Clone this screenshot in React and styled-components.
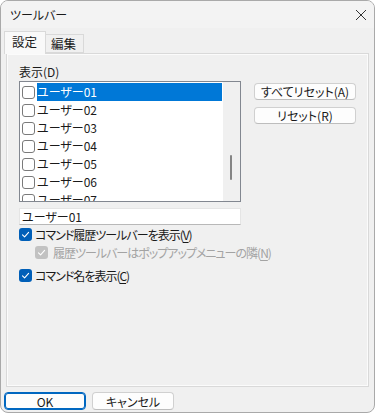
import React from 'react';
import styled, { createGlobalStyle } from 'styled-components';

const Global = createGlobalStyle`
  html, body { margin: 0; padding: 0; background: #ffffff; }
  body {
    font-family: "Noto Sans CJK JP", "Noto Sans", sans-serif;
    font-size: 12px;
    color: #1a1a1a;
    font-feature-settings: "palt";
  }
  * { box-sizing: border-box; }
`;

const Window = styled.div`
  width: 375px;
  height: 413px;
  display: flex;
  flex-direction: column;
  background: #f0f0f0;
  border: 1px solid #a9a9a9;
  border-radius: 8px;
  overflow: hidden;
`;

const TitleBar = styled.div`
  height: 27px;
  flex: none;
  display: flex;
  align-items: center;
  justify-content: space-between;
  padding: 0 4px 0 9px;
  background: #f3f3f3;
`;

const Title = styled.span`
  font-size: 12px;
  line-height: 16px;
`;

const CloseButton = styled.div`
  width: 14px;
  height: 14px;
  margin-right: 2px;
  display: flex;
  align-items: center;
  justify-content: center;
`;

const TabRow = styled.div`
  height: 25px;
  flex: none;
  display: flex;
  align-items: flex-end;
  padding-left: 3px;
  background: #f0f0f0;
`;

const Tab = styled.div`
  position: relative;
  z-index: ${(p) => (p.$active ? 2 : 1)};
  height: ${(p) => (p.$active ? 23 : 19)}px;
  margin-bottom: ${(p) => (p.$active ? -1 : 0)}px;
  padding: ${(p) => (p.$active ? '2px 8px 0 7px' : '1px 7px 0 5px')};
  background: ${(p) => (p.$active ? '#f9f9f9' : '#f0f0f0')};
  border: 1px solid #d9d9d9;
  border-bottom: ${(p) => (p.$active ? 'none' : '1px solid #d9d9d9')};
  border-left: ${(p) => (p.$active ? '1px solid #d9d9d9' : 'none')};
  font-size: 12.5px;
  line-height: 16px;
`;

const Panel = styled.div`
  flex: 1;
  margin: 0 5px;
  border: 1px solid #d9d9d9;
  box-shadow: inset 0 0 0 1px #fbfbfb;
  background: #f0f0f0;
  padding: 10px 12px;
  display: flex;
  flex-direction: column;
`;

const Label = styled.div`
  height: 16px;
  line-height: 16px;
  margin-bottom: 1px;
`;

const TopSection = styled.div`
  display: flex;
  align-items: flex-start;
`;

const ListColumn = styled.div`
  width: 222px;
  display: flex;
  flex-direction: column;
`;

const ListBox = styled.div`
  height: 121px;
  border: 1px solid #828790;
  display: flex;
  background: #ffffff;
  overflow: hidden;
`;

const ListArea = styled.div`
  flex: 1;
  padding-top: 1px;
  overflow: hidden;
`;

const Item = styled.div`
  height: 18px;
  display: flex;
  align-items: center;
  padding-left: 2px;
  padding-right: 1px;
`;

const BoxOutline = styled.span`
  width: 13px;
  height: 13px;
  flex: none;
  border: 1px solid #7a7a7a;
  border-radius: 3px;
  background: #ffffff;
`;

const ItemText = styled.span`
  flex: 1;
  height: 18px;
  line-height: 18px;
  margin-left: 2px;
  background: ${(p) => (p.$selected ? '#0078d7' : 'transparent')};
  color: ${(p) => (p.$selected ? '#ffffff' : '#1a1a1a')};
`;

const ScrollBar = styled.div`
  width: 17px;
  flex: none;
  background: #f0f0f0;
  padding: 73px 0 0 7px;
`;

const Thumb = styled.div`
  width: 2px;
  height: 25px;
  border-radius: 1px;
  background: #858585;
`;

const TextInput = styled.div`
  margin-top: 6px;
  height: 17px;
  width: 222px;
  background: #ffffff;
  border: 1px solid #e5e5e5;
  border-bottom-color: #b8b8b8;
  padding-left: 2px;
  line-height: 15px;
`;

const ButtonColumn = styled.div`
  margin-left: 13px;
  margin-top: 2px;
  display: flex;
  flex-direction: column;
  gap: 7px;
`;

const Button = styled.div`
  width: ${(p) => p.$w || 102}px;
  height: ${(p) => p.$h || 17}px;
  background: #fdfdfd;
  border: 1px solid ${(p) => (p.$default ? '#0067c0' : '#d0d0d0')};
  border-bottom-color: ${(p) => (p.$default ? '#0067c0' : '#bdbdbd')};
  box-shadow: ${(p) => (p.$default ? 'inset 0 0 0 1px #0067c0' : 'none')};
  border-radius: 4px;
  display: flex;
  align-items: center;
  justify-content: center;
  line-height: 15px;
`;

const Options = styled.div`
  display: flex;
  flex-direction: column;
`;

const OptionRow = styled.div`
  height: 18px;
  display: flex;
  align-items: center;
  gap: ${(p) => (p.$disabled ? 5 : 3)}px;
  padding-left: ${(p) => (p.$indent ? 16 : 0)}px;
  margin-top: ${(p) => (p.$spaced ? 5 : 0)}px;
  color: ${(p) => (p.$disabled ? '#a3a3a3' : '#1a1a1a')};
  letter-spacing: -1px;
`;

const CheckFill = styled.span`
  width: 13px;
  height: 13px;
  flex: none;
  border-radius: 3px;
  background: ${(p) => (p.$disabled ? '#c2c2c2' : '#005fb8')};
  display: flex;
  align-items: center;
  justify-content: center;
`;

const Key = styled.span`
  text-decoration: underline;
  text-underline-offset: 2px;
`;

const Footer = styled.div`
  height: 25px;
  flex: none;
  display: flex;
  gap: 6px;
  padding: 5px 0 0 3px;
`;

const Checked = ({ disabled }) => (
  <CheckFill $disabled={disabled}>
    <svg width="9" height="9" viewBox="0 0 9 9">
      <polyline points="1.5,4.8 3.6,6.8 7.6,2.4" fill="none" stroke="#ffffff" strokeWidth="1.1" strokeLinecap="round" strokeLinejoin="round" />
    </svg>
  </CheckFill>
);

const users = ['ユーザー01', 'ユーザー02', 'ユーザー03', 'ユーザー04', 'ユーザー05', 'ユーザー06', 'ユーザー07'];

export default function App() {
  return (
    <>
      <Global />
      <Window>
        <TitleBar>
          <Title>ツールバー</Title>
          <CloseButton>
            <svg width="12" height="12" viewBox="0 0 12 12">
              <path d="M1 1 L11 11 M11 1 L1 11" stroke="#333" strokeWidth="1" fill="none" />
            </svg>
          </CloseButton>
        </TitleBar>
        <TabRow>
          <Tab $active>設定</Tab>
          <Tab>編集</Tab>
        </TabRow>
        <Panel>
          <Label>表示(D)</Label>
          <TopSection>
            <ListColumn>
              <ListBox>
                <ListArea>
                  {users.map((u, i) => (
                    <Item key={u}>
                      <BoxOutline />
                      <ItemText $selected={i === 0}>{u}</ItemText>
                    </Item>
                  ))}
                </ListArea>
                <ScrollBar>
                  <Thumb />
                </ScrollBar>
              </ListBox>
              <TextInput>ユーザー01</TextInput>
            </ListColumn>
            <ButtonColumn>
              <Button>すべてリセット(A)</Button>
              <Button>リセット(R)</Button>
            </ButtonColumn>
          </TopSection>
          <Options>
            <OptionRow>
              <Checked />
              <span>コマンド履歴ツールバーを表示(<Key>V</Key>)</span>
            </OptionRow>
            <OptionRow $indent $disabled>
              <Checked disabled />
              <span>履歴ツールバーはポップアップメニューの隣(<Key>N</Key>)</span>
            </OptionRow>
            <OptionRow $spaced>
              <Checked />
              <span>コマンド名を表示(<Key>C</Key>)</span>
            </OptionRow>
          </Options>
        </Panel>
        <Footer>
          <Button $default $w={82} $h={18}>OK</Button>
          <Button $w={82} $h={18}>キャンセル</Button>
        </Footer>
      </Window>
    </>
  );
}
